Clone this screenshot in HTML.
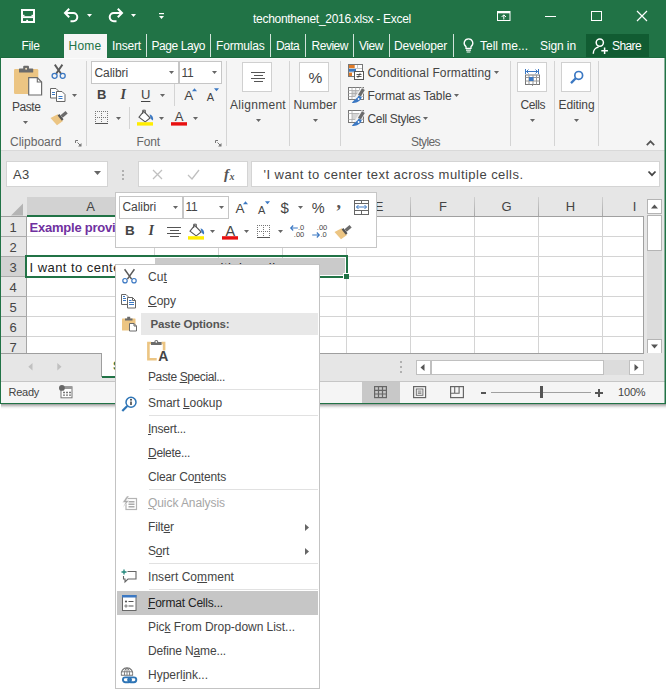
<!DOCTYPE html>
<html><head><meta charset="utf-8"><title>techonthenet_2016.xlsx - Excel</title>
<style>
html,body{margin:0;padding:0;background:#fff;}
body{width:666px;height:689px;position:relative;overflow:hidden;font-family:"Liberation Sans",sans-serif;}
body>div,body>svg,body>span{position:absolute;box-sizing:border-box;}
.t{white-space:nowrap;}
svg{overflow:visible;}
u{text-decoration:underline;text-underline-offset:1px;}
</style></head><body>
<div style="left:0px;top:0px;width:666px;height:404px;background:#217346;"></div>
<div style="left:0px;top:57px;width:666px;height:1px;background:#1c6a3e;"></div>
<div style="left:1px;top:58px;width:664px;height:92px;background:#f5f5f5;"></div>
<div style="left:1px;top:58px;width:664px;height:1px;background:#fbfbfb;"></div>
<div style="left:1px;top:150px;width:664px;height:47px;background:#e6e6e6;"></div>
<div style="left:1px;top:150px;width:664px;height:1px;background:#d9d9d9;"></div>
<svg style="left:21px;top:9px;" width="14" height="14" viewBox="0 0 14 14"><rect x="1" y="1" width="12" height="12" fill="none" stroke="#fff" stroke-width="2"/><rect x="2" y="7.200" width="10" height="1.900" fill="#fff"/><rect x="2" y="5.800" width="1.500" height="1.500" fill="#fff"/><rect x="10.500" y="5.800" width="1.500" height="1.500" fill="#fff"/><rect x="5.200" y="10.800" width="1.900" height="2.200" fill="#fff"/></svg>
<svg style="left:63px;top:8px;" width="16" height="15" viewBox="0 0 16 15"><path d="M2 5h8.2a4.1 4.1 0 0 1 0 8.2h-2.7" fill="none" stroke="#fff" stroke-width="2"/><path d="M6.2 0.8l-4.2 4.2l4.2 4.2" fill="none" stroke="#fff" stroke-width="2"/></svg>
<svg style="left:85.5px;top:13.0px;" width="7" height="5" viewBox="0 0 7 5"><path d="M1 1h5l-2.5 3z" fill="#fff"/></svg>
<svg style="left:107.5px;top:8px;" width="16" height="15" viewBox="0 0 16 15"><path d="M14 5h-8.2a4.1 4.1 0 0 0 0 8.2h2.7" fill="none" stroke="#fff" stroke-width="2"/><path d="M9.8 0.8l4.2 4.2l-4.2 4.2" fill="none" stroke="#fff" stroke-width="2"/></svg>
<svg style="left:129.5px;top:13.0px;" width="7" height="5" viewBox="0 0 7 5"><path d="M1 1h5l-2.5 3z" fill="#fff"/></svg>
<svg style="left:158px;top:12px;" width="7" height="8" viewBox="0 0 7 8"><rect x="1" y="1" width="5" height="1.2" fill="#fff"/><path d="M1 4h5l-2.5 3z" fill="#fff"/></svg>
<span id="t1" class="t" style="left:253px;top:10.5px;font-size:12px;line-height:16px;color:#ffffff;letter-spacing:-0.293px;">techonthenet_2016.xlsx - Excel</span>
<svg style="left:496.5px;top:11px;" width="14" height="10" viewBox="0 0 14 10"><rect x="0.5" y="0.5" width="12.500" height="9" fill="none" stroke="#fff"/><rect x="0.5" y="0.5" width="12.500" height="1.800" fill="#fff"/><path d="M6.800 4v4.500M4.600 6l2.200-2.200l2.200 2.200" fill="none" stroke="#fff" stroke-width="1"/></svg>
<div style="left:545px;top:16px;width:11px;height:1px;background:#ffffff;"></div>
<div style="left:591px;top:11px;width:10.5px;height:10px;border:1px solid #fff;"></div>
<svg style="left:636px;top:10px;" width="12" height="12" viewBox="0 0 12 12"><path d="M1 1l10 10M11 1l-10 10" stroke="#fff" stroke-width="1.2" fill="none"/></svg>
<span id="t2" class="t" style="left:21.5px;top:38.3px;font-size:12px;line-height:16px;color:#ffffff;letter-spacing:-0.336px;">File</span>
<div style="left:64px;top:34px;width:43px;height:24px;background:#f5f5f5;"></div>
<span id="t3" class="t" style="left:68.5px;top:38.3px;font-size:12px;line-height:16px;color:#217346;letter-spacing:0.246px;">Home</span>
<span id="t4" class="t" style="left:112px;top:38.3px;font-size:12px;line-height:16px;color:#ffffff;letter-spacing:-0.169px;">Insert</span>
<span id="t5" class="t" style="left:151.5px;top:38.3px;font-size:12px;line-height:16px;color:#ffffff;letter-spacing:-0.432px;">Page Layo</span>
<span id="t6" class="t" style="left:216px;top:38.3px;font-size:12px;line-height:16px;color:#ffffff;letter-spacing:-0.164px;">Formulas</span>
<span id="t7" class="t" style="left:276px;top:38.3px;font-size:12px;line-height:16px;color:#ffffff;letter-spacing:-0.590px;">Data</span>
<span id="t8" class="t" style="left:311.5px;top:38.3px;font-size:12px;line-height:16px;color:#ffffff;letter-spacing:-0.477px;">Review</span>
<span id="t9" class="t" style="left:359px;top:38.3px;font-size:12px;line-height:16px;color:#ffffff;letter-spacing:-0.449px;">View</span>
<span id="t10" class="t" style="left:394px;top:38.3px;font-size:12px;line-height:16px;color:#ffffff;letter-spacing:-0.189px;">Developer</span>
<div style="left:146px;top:34px;width:1px;height:23px;background:rgba(255,255,255,0.8);"></div>
<div style="left:210px;top:34px;width:1px;height:23px;background:rgba(255,255,255,0.8);"></div>
<div style="left:270px;top:34px;width:1px;height:23px;background:rgba(255,255,255,0.8);"></div>
<div style="left:305px;top:34px;width:1px;height:23px;background:rgba(255,255,255,0.8);"></div>
<div style="left:353px;top:34px;width:1px;height:23px;background:rgba(255,255,255,0.8);"></div>
<div style="left:389px;top:34px;width:1px;height:23px;background:rgba(255,255,255,0.8);"></div>
<div style="left:452.5px;top:34px;width:1px;height:23px;background:rgba(255,255,255,0.8);"></div>
<svg style="left:463px;top:38px;" width="11" height="15" viewBox="0 0 11 15"><path d="M5.500 0.800a4.300 4.300 0 0 0 -2.500 7.800v1.700h5v-1.700a4.300 4.300 0 0 0 -2.500 -7.800z" fill="none" stroke="#fff" stroke-width="1.300"/><path d="M3 12.200h5M3.600 14h3.800" stroke="#fff" stroke-width="1.200"/></svg>
<span id="t11" class="t" style="left:480px;top:38.3px;font-size:12px;line-height:16px;color:#ffffff;">Tell me...</span>
<span id="t12" class="t" style="left:540px;top:38.3px;font-size:12px;line-height:16px;color:#ffffff;letter-spacing:-0.100px;">Sign in</span>
<div style="left:586px;top:34px;width:63px;height:23px;background:#115c32;"></div>
<svg style="left:592px;top:37.5px;" width="17" height="17" viewBox="0 0 17 17"><circle cx="7.800" cy="4.600" r="3.600" fill="none" stroke="#fff" stroke-width="1.500"/><path d="M1.300 15.800a6.600 6.600 0 0 1 5.300-6.900" fill="none" stroke="#fff" stroke-width="1.500"/><path d="M12.600 9.400v6.600M9.300 12.700h6.600" stroke="#fff" stroke-width="1.500"/></svg>
<span id="t13" class="t" style="left:612px;top:38.3px;font-size:12px;line-height:16px;color:#ffffff;letter-spacing:-0.606px;">Share</span>
<div style="left:86px;top:61px;width:1px;height:85px;background:#d4d4d4;"></div>
<div style="left:226px;top:61px;width:1px;height:85px;background:#d4d4d4;"></div>
<div style="left:340px;top:61px;width:1px;height:85px;background:#d4d4d4;"></div>
<div style="left:510px;top:61px;width:1px;height:85px;background:#d4d4d4;"></div>
<div style="left:554px;top:61px;width:1px;height:85px;background:#d4d4d4;"></div>
<div style="left:598px;top:61px;width:1px;height:85px;background:#d4d4d4;"></div>
<svg style="left:14px;top:65px;" width="30" height="32" viewBox="0 0 30 32"><rect x="0" y="4" width="24.300" height="25.100" rx="1.300" fill="#ecc583"/>
<rect x="5" y="3.400" width="14.200" height="4.200" rx="0.600" fill="#6b6b6b"/><rect x="9.200" y="0.800" width="5.800" height="4" rx="1" fill="#6b6b6b"/><circle cx="12.100" cy="3.700" r="1" fill="#f3e3c3"/>
<path d="M14.700 12.700h8.600l4.300 4.300v13h-12.900z" fill="#fff" stroke="#6b6b6b" stroke-width="1.200"/><path d="M23.300 12.700v4.300h4.300" fill="none" stroke="#6b6b6b" stroke-width="1.100"/></svg>
<span id="t14" class="t" style="left:12px;top:98.9px;font-size:12px;line-height:16px;color:#444444;letter-spacing:-0.438px;">Paste</span>
<svg style="left:21.9px;top:119.9px;" width="7" height="5" viewBox="0 0 7 5"><path d="M1 1h5l-2.5 3z" fill="#666"/></svg>
<svg style="left:50.5px;top:64px;" width="16" height="16" viewBox="0 0 16 16"><path d="M3.800 0.600l6.600 9.600M11.400 0.600l-6.600 9.600" stroke="#5a5a5a" stroke-width="1.900" fill="none"/>
<circle cx="3.600" cy="11.800" r="2.500" fill="none" stroke="#3b78c3" stroke-width="1.300"/><circle cx="11.700" cy="11.800" r="2.500" fill="none" stroke="#3b78c3" stroke-width="1.300"/></svg>
<svg style="left:50px;top:88px;" width="16" height="14" viewBox="0 0 16 14"><path d="M0.5 0.5h5.5l2 2v7.5h-7.5z" fill="#fff" stroke="#666"/>
<path d="M6.5 3.5h5.5l3 3v7h-8.5z" fill="#fff" stroke="#666"/><path d="M8.5 8.5h4M8.5 10.5h4M2 4.5h3M2 6.5h3" stroke="#3b78c3"/></svg>
<svg style="left:71.0px;top:92.5px;" width="7" height="5" viewBox="0 0 7 5"><path d="M1 1h5l-2.5 3z" fill="#666"/></svg>
<svg style="left:50px;top:110px;" width="18" height="16" viewBox="0 0 18 16"><path d="M16.600 2.200l-5 4.300" stroke="#6b6b6b" stroke-width="3.300" fill="none"/><path d="M7.700 4.300l5.300 6.600l-6 4.300l-6.500-7.300z" fill="#ecc583"/><path d="M8.500 4.800l4.200 5.200" stroke="#555" stroke-width="2.200" fill="none"/></svg>
<span id="t15" class="t" style="left:10px;top:134.2px;font-size:12px;line-height:16px;color:#666;letter-spacing:0.014px;">Clipboard</span>
<svg style="left:75px;top:140px;" width="7" height="7" viewBox="0 0 7 7"><path d="M0.5 3v-2.5h2.5" fill="none" stroke="#777"/><path d="M2.5 2.5l3.5 3.5" stroke="#777"/><path d="M6.5 3v3.5h-3.5z" fill="#777"/></svg>
<div style="left:91px;top:61px;width:88px;height:23px;background:#fff;border:1px solid #c6c6c6;"></div>
<div style="left:179px;top:61px;width:43px;height:23px;background:#fff;border:1px solid #c6c6c6;"></div>
<span id="t16" class="t" style="left:94.5px;top:64.8px;font-size:12px;line-height:16px;color:#444444;letter-spacing:-0.074px;">Calibri</span>
<svg style="left:168.0px;top:70.0px;" width="7" height="5" viewBox="0 0 7 5"><path d="M1 1h5l-2.5 3z" fill="#666"/></svg>
<span id="t17" class="t" style="left:181.5px;top:64.8px;font-size:12px;line-height:16px;color:#444444;letter-spacing:-0.234px;">11</span>
<svg style="left:211.0px;top:70.0px;" width="7" height="5" viewBox="0 0 7 5"><path d="M1 1h5l-2.5 3z" fill="#666"/></svg>
<span id="t18" class="t" style="left:97px;top:87.0px;font-size:13px;line-height:16px;color:#444444;font-weight:bold;">B</span>
<span id="t19" class="t" style="left:120.5px;top:87.0px;font-size:13px;line-height:16px;color:#444444;font-weight:bold;font-style:italic;font-family:'Liberation Serif',serif;font-size:14px;">I</span>
<span id="t20" class="t" style="left:141px;top:87.0px;font-size:13px;line-height:16px;color:#444444;text-decoration:underline;text-underline-offset:2px;">U</span>
<svg style="left:158.8px;top:92.8px;" width="7" height="5" viewBox="0 0 7 5"><path d="M1 1h5l-2.5 3z" fill="#666"/></svg>
<div style="left:174px;top:84px;width:1px;height:22px;background:#d4d4d4;"></div>
<span id="t21" class="t" style="left:184.3px;top:87.7px;font-size:13.5px;line-height:16px;color:#444444;">A</span>
<svg style="left:192.10000000000002px;top:88px;" width="5" height="4" viewBox="0 0 5 4"><path d="M0 3.2l2.5-3l2.5 3z" fill="#3b78c3"/></svg>
<span id="t22" class="t" style="left:206.8px;top:88.7px;font-size:11px;line-height:16px;color:#444444;">A</span>
<svg style="left:214.10000000000002px;top:88px;" width="5" height="4" viewBox="0 0 5 4"><path d="M0 0.3h5l-2.5 3z" fill="#3b78c3"/></svg>
<svg style="left:95px;top:111px;" width="13" height="13" viewBox="0 0 13 13"><path d="M0 0.5h13M0 6.5h13M0.5 0v12M6.5 0v12M12.5 0v12" stroke="#777" stroke-dasharray="1 1" fill="none"/><path d="M0 12.5h13" stroke="#555"/></svg>
<svg style="left:115.2px;top:116.0px;" width="7" height="5" viewBox="0 0 7 5"><path d="M1 1h5l-2.5 3z" fill="#666"/></svg>
<div style="left:129px;top:107px;width:1px;height:22px;background:#d4d4d4;"></div>
<svg style="left:137px;top:108px;" width="17" height="18" viewBox="0 0 17 18"><path d="M6.7 3.4l6.5 6.6l-5 3.900l-6.2-4.7z" fill="#fff" stroke="#555" stroke-width="1.1"/><path d="M5.7 6v-3.800h2.6v3.2" fill="none" stroke="#555" stroke-width="1"/>
<path d="M12.6 6.2c2.8 1.2 4.2 3.6 3.2 6.300c-1.6-0.5-2.6-3-3.2-6.300z" fill="#3b78c3"/><rect x="0" y="14.2" width="16" height="3.4" fill="#ffed00"/></svg>
<svg style="left:158.2px;top:116.0px;" width="7" height="5" viewBox="0 0 7 5"><path d="M1 1h5l-2.5 3z" fill="#666"/></svg>
<svg style="left:171px;top:108px;" width="17" height="18" viewBox="0 0 17 18"><rect x="0" y="14.2" width="16" height="3.4" fill="#e81010"/></svg>
<span id="t23" class="t" style="left:179px;top:109.0955px;font-size:13px;line-height:16px;color:#444444;transform:translateX(-50%);">A</span>
<svg style="left:192.3px;top:116.0px;" width="7" height="5" viewBox="0 0 7 5"><path d="M1 1h5l-2.5 3z" fill="#666"/></svg>
<span id="t24" class="t" style="left:136.5px;top:133.5px;font-size:12px;line-height:16px;color:#666;letter-spacing:-0.129px;">Font</span>
<svg style="left:215px;top:139.5px;" width="7" height="7" viewBox="0 0 7 7"><path d="M0.5 3v-2.5h2.5" fill="none" stroke="#777"/><path d="M2.5 2.5l3.5 3.5" stroke="#777"/><path d="M6.5 3v3.5h-3.5z" fill="#777"/></svg>
<div style="left:242px;top:62px;width:30px;height:30px;background:#fff;border:1px solid #d0d0d0;"></div>
<div style="left:251px;top:72px;width:14px;height:1px;background:#555;"></div>
<div style="left:253.5px;top:75px;width:9.5px;height:1px;background:#555;"></div>
<div style="left:251px;top:78px;width:14px;height:1px;background:#555;"></div>
<div style="left:253.5px;top:81px;width:9.5px;height:1px;background:#555;"></div>
<span id="t25" class="t" style="left:230px;top:96.8px;font-size:12px;line-height:16px;color:#444444;letter-spacing:0.292px;">Alignment</span>
<svg style="left:255.0px;top:118.1px;" width="7" height="5" viewBox="0 0 7 5"><path d="M1 1h5l-2.5 3z" fill="#666"/></svg>
<div style="left:289px;top:61px;width:1px;height:85px;background:#d4d4d4;"></div>
<div style="left:299px;top:62px;width:30px;height:30px;background:#fff;border:1px solid #d0d0d0;"></div>
<span id="t26" class="t" style="left:308.5px;top:69.8px;font-size:15.5px;line-height:16px;color:#444444;">%</span>
<span id="t27" class="t" style="left:293.5px;top:96.8px;font-size:12px;line-height:16px;color:#444444;letter-spacing:0.135px;">Number</span>
<svg style="left:312.0px;top:118.1px;" width="7" height="5" viewBox="0 0 7 5"><path d="M1 1h5l-2.5 3z" fill="#666"/></svg>
<svg style="left:348px;top:64px;" width="16" height="16" viewBox="0 0 16 16"><rect x="0.5" y="0.5" width="14" height="12" fill="#fff" stroke="#777"/><path d="M9.5 1v3.500M1 4.500h13M1 8.200h6" stroke="#c8c8c8"/>
<rect x="1" y="1" width="5.7" height="3" fill="#e07b28"/><rect x="1" y="5" width="7" height="2.7" fill="#3b78c3"/><rect x="1" y="8.7" width="3" height="3.3" fill="#e07b28"/>
<rect x="6.5" y="7.5" width="9" height="8" fill="#fff" stroke="#555"/><path d="M8.5 10.500h5M8.5 12.500h5M12.2 9.200l-2.4 4.6" stroke="#444" stroke-width="0.9"/></svg>
<span id="t28" class="t" style="left:367.5px;top:64.8px;font-size:12px;line-height:16px;color:#444444;letter-spacing:0.126px;">Conditional Formatting</span>
<svg style="left:493.0px;top:70.3px;" width="7" height="5" viewBox="0 0 7 5"><path d="M1 1h5l-2.5 3z" fill="#666"/></svg>
<svg style="left:348px;top:87px;" width="17" height="17" viewBox="0 0 17 17"><rect x="0.5" y="0.5" width="15" height="12" fill="#fff" stroke="#777"/><rect x="4" y="3.5" width="7.5" height="6" fill="#d6d6d6"/><path d="M0.5 3.500h15M0.5 6.500h15M0.5 9.500h15M4 0.500v12M7.7 0.500v12M11.5 0.500v12" stroke="#aaa" stroke-width="0.8"/><path d="M15.8 1.5l-7.8 11.5" stroke="#f3f3f3" stroke-width="5" fill="none"/><path d="M15.4 2.2l-4 6.5" stroke="#6b6b6b" stroke-width="3.3" fill="none"/>
<path d="M10.6 8.4c-1.2 3-4.5 4.200-6.8 7.300c4 0.800 9-1 10-5.600z" fill="#3b78c3"/><circle cx="10.600" cy="12" r="0.900" fill="#fff"/></svg>
<span id="t29" class="t" style="left:367.5px;top:87.5px;font-size:12px;line-height:16px;color:#444444;letter-spacing:-0.122px;">Format as Table</span>
<svg style="left:452.7px;top:92.7px;" width="7" height="5" viewBox="0 0 7 5"><path d="M1 1h5l-2.5 3z" fill="#666"/></svg>
<svg style="left:348px;top:110px;" width="17" height="17" viewBox="0 0 17 17"><rect x="0.5" y="0.5" width="15" height="12" fill="#fff" stroke="#777"/><rect x="4" y="3.5" width="11" height="6" fill="#d6d6d6"/><path d="M0.5 3.500h15M0.5 9.500h15M4 0.500v12" stroke="#aaa" stroke-width="0.8"/><path d="M15.8 1.5l-7.8 11.5" stroke="#f3f3f3" stroke-width="5" fill="none"/><path d="M15.4 2.2l-4 6.5" stroke="#6b6b6b" stroke-width="3.3" fill="none"/>
<path d="M10.6 8.4c-1.2 3-4.5 4.200-6.8 7.300c4 0.800 9-1 10-5.600z" fill="#3b78c3"/><circle cx="10.600" cy="12" r="0.900" fill="#fff"/></svg>
<span id="t30" class="t" style="left:367.5px;top:110.5px;font-size:12px;line-height:16px;color:#444444;letter-spacing:-0.335px;">Cell Styles</span>
<svg style="left:421.7px;top:115.7px;" width="7" height="5" viewBox="0 0 7 5"><path d="M1 1h5l-2.5 3z" fill="#666"/></svg>
<span id="t31" class="t" style="left:411px;top:133.5px;font-size:12px;line-height:16px;color:#666;letter-spacing:-0.615px;">Styles</span>
<div style="left:517px;top:62px;width:30px;height:30px;background:#fff;border:1px solid #d0d0d0;"></div>
<svg style="left:525px;top:68.5px;" width="16" height="17" viewBox="0 0 16 17"><path d="M1 2.500h12M0.5 0v5M13.5 0v5M3.5 0.500l-2 2l2 2M10.5 0.500l2 2l-2 2" stroke="#3b78c3" fill="none"/>
<rect x="0.5" y="6" width="14" height="9.5" fill="#fff" stroke="#777"/><path d="M0.5 8.500h14M0.5 12h14M4 6v9.500M8 6v9.500M11.5 6v9.5" stroke="#999"/><rect x="4" y="8" width="4.5" height="4" fill="#3b78c3"/><path d="M7.5 15.500v1.3" stroke="#777"/></svg>
<span id="t32" class="t" style="left:520.5px;top:96.8px;font-size:12px;line-height:16px;color:#444444;letter-spacing:-0.434px;">Cells</span>
<svg style="left:529.0px;top:118.1px;" width="7" height="5" viewBox="0 0 7 5"><path d="M1 1h5l-2.5 3z" fill="#666"/></svg>
<div style="left:561px;top:62px;width:30px;height:30px;background:#fff;border:1px solid #d0d0d0;"></div>
<svg style="left:569px;top:68.5px;" width="16" height="16" viewBox="0 0 16 16"><circle cx="9.7" cy="6.4" r="3.9" fill="none" stroke="#3b78c3" stroke-width="1.7"/><path d="M6.8 9.300l-4.8 4.8" stroke="#3b78c3" stroke-width="2.3"/></svg>
<span id="t33" class="t" style="left:558.5px;top:96.8px;font-size:12px;line-height:16px;color:#444444;letter-spacing:-0.100px;">Editing</span>
<svg style="left:573.0px;top:118.1px;" width="7" height="5" viewBox="0 0 7 5"><path d="M1 1h5l-2.5 3z" fill="#666"/></svg>
<svg style="left:646px;top:139.5px;" width="10" height="6" viewBox="0 0 10 6"><path d="M0.8 5.200l3.7-3.900l3.7 3.9" fill="none" stroke="#555" stroke-width="1.7"/></svg>
<div style="left:6px;top:161px;width:102px;height:26px;background:#fff;border:1px solid #d4d4d4;"></div>
<span id="t34" class="t" style="left:13px;top:167.0px;font-size:13px;line-height:16px;color:#444444;letter-spacing:0.297px;">A3</span>
<svg style="left:93.2px;top:169.9px;" width="9" height="6" viewBox="0 0 9 6"><path d="M1 1h7l-3.5 4z" fill="#666"/></svg>
<div style="left:122px;top:169.5px;width:2px;height:2px;background:#b0b0b0;"></div>
<div style="left:122px;top:173.5px;width:2px;height:2px;background:#b0b0b0;"></div>
<div style="left:122px;top:177.5px;width:2px;height:2px;background:#b0b0b0;"></div>
<div style="left:138px;top:161px;width:110px;height:26px;background:#fff;border:1px solid #d4d4d4;"></div>
<svg style="left:152px;top:169px;" width="11" height="11" viewBox="0 0 11 11"><path d="M1 1l9 9M10 1l-9 9" stroke="#c0c0c0" stroke-width="1.3"/></svg>
<svg style="left:187px;top:169px;" width="13" height="11" viewBox="0 0 13 11"><path d="M1 6l4 4l7-9" stroke="#c0c0c0" stroke-width="1.3" fill="none"/></svg>
<span id="t35" class="t" style="left:224px;top:165.5px;font-size:15px;line-height:16px;color:#555;font-weight:bold;font-style:italic;font-family:'Liberation Serif',serif;">f</span>
<span id="t36" class="t" style="left:229.5px;top:168.5px;font-size:10px;line-height:16px;color:#555;font-weight:bold;font-style:italic;font-family:'Liberation Serif',serif;">x</span>
<div style="left:251px;top:161px;width:409px;height:26px;background:#fff;border:1px solid #d4d4d4;"></div>
<span id="t37" class="t" style="left:263.5px;top:167.0px;font-size:13px;line-height:16px;color:#444444;letter-spacing:0.456px;">'I want to center text across multiple cells.</span>
<svg style="left:647.5px;top:171px;" width="9" height="6" viewBox="0 0 9 6"><path d="M0.5 0.5l3.5 3.7l3.5-3.7" fill="none" stroke="#444" stroke-width="1.8"/></svg>
<div style="left:1px;top:197px;width:643px;height:156px;background:#fff;"></div>
<div style="left:1px;top:197px;width:664px;height:20px;background:#e6e6e6;"></div>
<div style="left:1px;top:197px;width:26px;height:156px;background:#e6e6e6;"></div>
<svg style="left:11px;top:203px;" width="13" height="13" viewBox="0 0 13 13"><path d="M12 0.5v12h-12z" fill="#b4b4b4"/></svg>
<div style="left:27px;top:197px;width:320px;height:19px;background:#d2d2d2;"></div>
<div style="left:27px;top:215px;width:320px;height:2px;background:#217346;"></div>
<div style="left:1px;top:257px;width:26px;height:20px;background:#d2d2d2;"></div>
<div style="left:25px;top:257px;width:2px;height:20px;background:#217346;"></div>
<div style="left:154px;top:197px;width:1px;height:19px;background:linear-gradient(#d0d0d0,#a8a8a8);"></div>
<div style="left:154px;top:217px;width:1px;height:136px;background:#d4d4d4;"></div>
<div style="left:218px;top:197px;width:1px;height:19px;background:linear-gradient(#d0d0d0,#a8a8a8);"></div>
<div style="left:218px;top:217px;width:1px;height:136px;background:#d4d4d4;"></div>
<div style="left:282px;top:197px;width:1px;height:19px;background:linear-gradient(#d0d0d0,#a8a8a8);"></div>
<div style="left:282px;top:217px;width:1px;height:136px;background:#d4d4d4;"></div>
<div style="left:346px;top:197px;width:1px;height:19px;background:linear-gradient(#d0d0d0,#a8a8a8);"></div>
<div style="left:346px;top:217px;width:1px;height:136px;background:#d4d4d4;"></div>
<div style="left:410px;top:197px;width:1px;height:19px;background:linear-gradient(#d0d0d0,#a8a8a8);"></div>
<div style="left:410px;top:217px;width:1px;height:136px;background:#d4d4d4;"></div>
<div style="left:474px;top:197px;width:1px;height:19px;background:linear-gradient(#d0d0d0,#a8a8a8);"></div>
<div style="left:474px;top:217px;width:1px;height:136px;background:#d4d4d4;"></div>
<div style="left:538px;top:197px;width:1px;height:19px;background:linear-gradient(#d0d0d0,#a8a8a8);"></div>
<div style="left:538px;top:217px;width:1px;height:136px;background:#d4d4d4;"></div>
<div style="left:602px;top:197px;width:1px;height:19px;background:linear-gradient(#d0d0d0,#a8a8a8);"></div>
<div style="left:602px;top:217px;width:1px;height:136px;background:#d4d4d4;"></div>
<div style="left:26px;top:217px;width:1px;height:136px;background:#a6a6a6;"></div>
<div style="left:1px;top:216px;width:643px;height:1px;background:#a0a0a0;"></div>
<div style="left:27px;top:215px;width:320px;height:2px;background:#217346;"></div>
<div style="left:27px;top:236px;width:616px;height:1px;background:#d4d4d4;"></div>
<div style="left:1px;top:236px;width:26px;height:1px;background:#ababab;"></div>
<span id="t38" class="t" style="left:9.5px;top:220.0px;font-size:13px;line-height:16px;color:#444444;">1</span>
<div style="left:27px;top:256px;width:616px;height:1px;background:#d4d4d4;"></div>
<div style="left:1px;top:256px;width:26px;height:1px;background:#ababab;"></div>
<span id="t39" class="t" style="left:9.5px;top:240.0px;font-size:13px;line-height:16px;color:#444444;">2</span>
<div style="left:27px;top:276px;width:616px;height:1px;background:#d4d4d4;"></div>
<div style="left:1px;top:276px;width:26px;height:1px;background:#ababab;"></div>
<span id="t40" class="t" style="left:9.5px;top:260.0px;font-size:13px;line-height:16px;color:#444444;">3</span>
<div style="left:27px;top:296px;width:616px;height:1px;background:#d4d4d4;"></div>
<div style="left:1px;top:296px;width:26px;height:1px;background:#ababab;"></div>
<span id="t41" class="t" style="left:9.5px;top:280.0px;font-size:13px;line-height:16px;color:#444444;">4</span>
<div style="left:27px;top:316px;width:616px;height:1px;background:#d4d4d4;"></div>
<div style="left:1px;top:316px;width:26px;height:1px;background:#ababab;"></div>
<span id="t42" class="t" style="left:9.5px;top:300.0px;font-size:13px;line-height:16px;color:#444444;">5</span>
<div style="left:27px;top:336px;width:616px;height:1px;background:#d4d4d4;"></div>
<div style="left:1px;top:336px;width:26px;height:1px;background:#ababab;"></div>
<span id="t43" class="t" style="left:9.5px;top:320.0px;font-size:13px;line-height:16px;color:#444444;">6</span>
<div style="left:27px;top:356px;width:616px;height:1px;background:#d4d4d4;"></div>
<div style="left:1px;top:356px;width:26px;height:1px;background:#ababab;"></div>
<span id="t44" class="t" style="left:9.5px;top:340.0px;font-size:13px;line-height:16px;color:#444444;">7</span>
<span id="t45" class="t" style="left:90.5px;top:198.5px;font-size:13px;line-height:16px;color:#444444;transform:translateX(-50%);">A</span>
<span id="t46" class="t" style="left:379px;top:198.5px;font-size:13px;line-height:16px;color:#444444;transform:translateX(-50%);">E</span>
<span id="t47" class="t" style="left:443px;top:198.5px;font-size:13px;line-height:16px;color:#444444;transform:translateX(-50%);">F</span>
<span id="t48" class="t" style="left:506.5px;top:198.5px;font-size:13px;line-height:16px;color:#444444;transform:translateX(-50%);">G</span>
<span id="t49" class="t" style="left:570.5px;top:198.5px;font-size:13px;line-height:16px;color:#444444;transform:translateX(-50%);">H</span>
<span id="t50" class="t" style="left:634.5px;top:198.5px;font-size:13px;line-height:16px;color:#444444;transform:translateX(-50%);">I</span>
<span id="t51" class="t" style="left:29.5px;top:220.0px;font-size:13px;line-height:16px;color:#7030a0;font-weight:bold;letter-spacing:-0.221px;">Example provi</span>
<div style="left:155px;top:258px;width:190px;height:17px;background:#cacaca;"></div>
<span id="t52" class="t" style="left:29.5px;top:260.0px;font-size:13px;line-height:16px;color:#222;letter-spacing:0.455px;">I want to center text across multiple cells.</span>
<div style="left:116px;top:257px;width:38.5px;height:8px;background:#fff;"></div>
<div style="left:25px;top:255px;width:323px;height:23px;border:2px solid #217346;"></div>
<div style="left:343px;top:273px;width:5px;height:5px;background:#217346;box-sizing:content-box;border-left:1px solid #fff;border-top:1px solid #fff;"></div>
<div style="left:644px;top:197px;width:21px;height:156px;background:#e6e6e6;"></div>
<div style="left:643px;top:216px;width:1px;height:138px;background:#a0a0a0;"></div>
<div style="left:647px;top:199px;width:15px;height:14.5px;background:#fff;border:1px solid #b4b4b4;"></div>
<svg style="left:651px;top:204px;" width="7" height="5" viewBox="0 0 7 5"><path d="M0 4.5l3.5-4l3.5 4z" fill="#555"/></svg>
<div style="left:647px;top:214.5px;width:15px;height:36px;background:#fff;border:1px solid #b4b4b4;"></div>
<div style="left:647px;top:250.5px;width:15px;height:88.5px;background:#dcdcdc;"></div>
<div style="left:647px;top:339px;width:15px;height:14.5px;background:#fff;border:1px solid #b4b4b4;"></div>
<svg style="left:651px;top:344px;" width="7" height="5" viewBox="0 0 7 5"><path d="M0 0.5h7l-3.5 4z" fill="#555"/></svg>
<div style="left:1px;top:353px;width:664px;height:28px;background:#e6e6e6;"></div>
<div style="left:1px;top:353px;width:643px;height:1px;background:#9e9e9e;"></div>
<div style="left:1px;top:381px;width:664px;height:1px;background:#c6c6c6;"></div>
<svg style="left:28px;top:362.5px;" width="5" height="8" viewBox="0 0 5 8"><path d="M4.5 0v7.5l-4.2-3.75z" fill="#c0c0c0"/></svg>
<svg style="left:56.5px;top:362.5px;" width="5" height="8" viewBox="0 0 5 8"><path d="M0.3 0v7.5l4.2-3.75z" fill="#c0c0c0"/></svg>
<div style="left:101px;top:353px;width:60px;height:24px;background:#fff;border-left:1px solid #9e9e9e;"></div>
<div style="left:102px;top:376px;width:60px;height:2px;background:#217346;"></div>
<span id="t53" class="t" style="left:113px;top:358.0px;font-size:12px;line-height:16px;color:#217346;font-weight:bold;">S</span>
<div style="left:399.5px;top:361px;width:2px;height:2px;background:#b0b0b0;"></div>
<div style="left:399.5px;top:366px;width:2px;height:2px;background:#b0b0b0;"></div>
<div style="left:399.5px;top:371px;width:2px;height:2px;background:#b0b0b0;"></div>
<div style="left:416px;top:360px;width:228px;height:15px;background:#dcdcdc;"></div>
<div style="left:416px;top:360px;width:15px;height:15px;background:#fff;border:1px solid #c0c0c0;"></div>
<svg style="left:420px;top:364px;" width="5" height="7" viewBox="0 0 5 7"><path d="M4.5 0v7l-4-3.5z" fill="#555"/></svg>
<div style="left:431px;top:360px;width:173px;height:15px;background:#fff;border:1px solid #c0c0c0;"></div>
<div style="left:629px;top:360px;width:15px;height:15px;background:#fff;border:1px solid #c0c0c0;"></div>
<svg style="left:634px;top:364px;" width="5" height="7" viewBox="0 0 5 7"><path d="M0.5 0v7l4-3.5z" fill="#555"/></svg>
<div style="left:1px;top:382px;width:664px;height:21px;background:#f5f5f5;"></div>
<span id="t54" class="t" style="left:8.5px;top:384.2px;font-size:11px;line-height:16px;color:#444444;letter-spacing:-0.259px;">Ready</span>
<svg style="left:59px;top:385px;" width="14" height="14" viewBox="0 0 14 14"><rect x="2" y="1.800" width="11" height="11" fill="#fff" stroke="#777"/><rect x="2" y="1.800" width="11" height="2.200" fill="#999"/><path d="M4 7.500h2M7 7.500h2M10 7.500h2M4 10.200h2M7 10.200h2M10 10.200h2" stroke="#777" stroke-width="1.300"/><circle cx="2.900" cy="2.900" r="2.900" fill="#666"/></svg>
<div style="left:362px;top:382px;width:38px;height:21px;background:#c8c8c8;"></div>
<svg style="left:374px;top:385.5px;" width="14" height="13" viewBox="0 0 14 13"><rect x="0.600" y="0.600" width="11.800" height="11" fill="none" stroke="#666" stroke-width="1.200"/><path d="M0.600 4.300h11.800M0.600 8h11.800M4.500 0.600v11M8.500 0.600v11" stroke="#666" stroke-width="1.200"/></svg>
<svg style="left:412.5px;top:385.5px;" width="14" height="13" viewBox="0 0 14 13"><rect x="0.600" y="0.600" width="12" height="11" fill="none" stroke="#666" stroke-width="1.200"/><rect x="3.300" y="3" width="6.600" height="6.300" fill="none" stroke="#666" stroke-width="0.900"/><path d="M4.800 5h3.600M4.800 6.200h3.600M4.800 7.500h3.600" stroke="#666" stroke-width="0.700"/></svg>
<svg style="left:450px;top:385.5px;" width="15" height="13" viewBox="0 0 15 13"><rect x="0.600" y="0.600" width="12.800" height="11" fill="none" stroke="#666" stroke-width="1.200"/><path d="M0.600 7.300h8.500v-6.700M4.700 0.600v6.700" fill="none" stroke="#666" stroke-width="1.100"/></svg>
<div style="left:481px;top:392px;width:5px;height:1.5px;background:#555;"></div>
<div style="left:491px;top:392px;width:100px;height:1px;background:#a0a0a0;"></div>
<div style="left:539.5px;top:386px;width:3px;height:12px;background:#555;"></div>
<div style="left:595px;top:392px;width:8px;height:1.5px;background:#555;"></div>
<div style="left:598.2px;top:388.5px;width:1.5px;height:8px;background:#555;"></div>
<span id="t55" class="t" style="left:618px;top:384.2px;font-size:11px;line-height:16px;color:#444444;letter-spacing:-0.160px;">100%</span>
<div style="left:0px;top:403px;width:666px;height:1px;background:#217346;"></div>
<div style="left:1px;top:404px;width:665px;height:5px;background:linear-gradient(rgba(0,0,0,0.40),rgba(0,0,0,0.20) 35%,rgba(0,0,0,0.06) 70%,rgba(0,0,0,0));"></div>
<div style="left:664px;top:58px;width:1px;height:345px;background:rgba(33,115,70,0.5);"></div>
<div style="left:115px;top:192px;width:262px;height:56px;background:#fff;border:1px solid #c6c6c6;"></div>
<div style="left:119px;top:196px;width:64px;height:23px;background:#fff;border:1px solid #c6c6c6;"></div>
<div style="left:183px;top:196px;width:46px;height:23px;background:#fff;border:1px solid #c6c6c6;"></div>
<span id="t56" class="t" style="left:122.5px;top:198.8px;font-size:12px;line-height:16px;color:#444444;letter-spacing:-0.074px;">Calibri</span>
<svg style="left:172.1px;top:204.8px;" width="7" height="5" viewBox="0 0 7 5"><path d="M1 1h5l-2.5 3z" fill="#666"/></svg>
<span id="t57" class="t" style="left:185.5px;top:198.8px;font-size:12px;line-height:16px;color:#444444;letter-spacing:-0.234px;">11</span>
<svg style="left:217.9px;top:204.8px;" width="7" height="5" viewBox="0 0 7 5"><path d="M1 1h5l-2.5 3z" fill="#666"/></svg>
<span id="t58" class="t" style="left:235.5px;top:200.5px;font-size:13.5px;line-height:16px;color:#444444;">A</span>
<svg style="left:243.3px;top:200.8px;" width="5" height="4" viewBox="0 0 5 4"><path d="M0 3.2l2.5-3l2.5 3z" fill="#3b78c3"/></svg>
<span id="t59" class="t" style="left:258.0px;top:201.5px;font-size:11px;line-height:16px;color:#444444;">A</span>
<svg style="left:265.3px;top:200.8px;" width="5" height="4" viewBox="0 0 5 4"><path d="M0 0.3h5l-2.5 3z" fill="#3b78c3"/></svg>
<span id="t60" class="t" style="left:280.5px;top:200.0px;font-size:15px;line-height:16px;color:#444444;">$</span>
<svg style="left:297.2px;top:204.8px;" width="7" height="5" viewBox="0 0 7 5"><path d="M1 1h5l-2.5 3z" fill="#666"/></svg>
<span id="t61" class="t" style="left:311.8px;top:200.3px;font-size:14.5px;line-height:16px;color:#444444;">%</span>
<span id="t62" class="t" style="left:336.5px;top:193.5px;font-size:18px;line-height:16px;color:#555;font-weight:bold;font-family:'Liberation Serif',serif;">,</span>
<svg style="left:354px;top:200px;" width="15" height="15" viewBox="0 0 15 15"><rect x="0.5" y="0.5" width="14" height="14" fill="#fff" stroke="#666" stroke-width="1"/><path d="M0.500 3.500h14M0.500 10.500h14M7.500 0.500v3M7.500 10.500v4" stroke="#666" stroke-width="1"/><path d="M2.500 7h10M4.500 5l-2 2l2 2M10.500 5l2 2l-2 2" stroke="#3b78c3" fill="none"/></svg>
<span id="t63" class="t" style="left:125px;top:223.4px;font-size:13.5px;line-height:16px;color:#444444;font-weight:bold;">B</span>
<span id="t64" class="t" style="left:148.5px;top:223.0px;font-size:14px;line-height:16px;color:#444444;font-weight:bold;font-style:italic;font-family:'Liberation Serif',serif;">I</span>
<div style="left:167px;top:227px;width:14px;height:1px;background:#555;"></div>
<div style="left:169.5px;top:230px;width:9.5px;height:1px;background:#555;"></div>
<div style="left:167px;top:233px;width:14px;height:1px;background:#555;"></div>
<div style="left:169.5px;top:236px;width:9.5px;height:1px;background:#555;"></div>
<svg style="left:188px;top:222px;" width="17" height="18" viewBox="0 0 17 18"><path d="M6.7 3.4l6.5 6.6l-5 3.900l-6.2-4.7z" fill="#fff" stroke="#555" stroke-width="1.1"/><path d="M5.7 6v-3.800h2.6v3.2" fill="none" stroke="#555" stroke-width="1"/>
<path d="M12.6 6.2c2.8 1.2 4.2 3.6 3.2 6.300c-1.6-0.5-2.6-3-3.2-6.300z" fill="#3b78c3"/><rect x="0" y="14.2" width="16" height="3.4" fill="#ffed00"/></svg>
<svg style="left:209.1px;top:228.5px;" width="7" height="5" viewBox="0 0 7 5"><path d="M1 1h5l-2.5 3z" fill="#666"/></svg>
<svg style="left:222.3px;top:222px;" width="17" height="18" viewBox="0 0 17 18"><rect x="0" y="14.2" width="16" height="3.4" fill="#e81010"/></svg>
<span id="t65" class="t" style="left:230.3px;top:222.57575px;font-size:14.5px;line-height:16px;color:#444444;transform:translateX(-50%);">A</span>
<svg style="left:243.0px;top:228.5px;" width="7" height="5" viewBox="0 0 7 5"><path d="M1 1h5l-2.5 3z" fill="#666"/></svg>
<svg style="left:257px;top:225px;" width="13" height="13" viewBox="0 0 13 13"><path d="M0 0.5h13M0 6.5h13M0.5 0v12M6.5 0v12M12.5 0v12" stroke="#777" stroke-dasharray="1 1" fill="none"/><path d="M0 12.5h13" stroke="#555"/></svg>
<svg style="left:277.0px;top:228.5px;" width="7" height="5" viewBox="0 0 7 5"><path d="M1 1h5l-2.5 3z" fill="#666"/></svg>
<svg style="left:290px;top:225px;" width="8" height="6" viewBox="0 0 8 6"><path d="M0.800 3h7M3.200 0.500l-2.500 2.500l2.500 2.500" stroke="#3b78c3" fill="none" stroke-width="1.100"/></svg>
<span id="t66" class="t" style="left:284.3px;top:223.0px;font-size:7.5px;line-height:10px;color:#444444;text-align:right;width:20px;">.0</span>
<span id="t67" class="t" style="left:284.3px;top:229.7px;font-size:7.5px;line-height:10px;color:#444444;text-align:right;width:20px;">.00</span>
<svg style="left:312px;top:231.7px;" width="8" height="6" viewBox="0 0 8 6"><path d="M0.200 3h7M4.800 0.500l2.500 2.500l-2.500 2.500" stroke="#3b78c3" fill="none" stroke-width="1.100"/></svg>
<span id="t68" class="t" style="left:307.3px;top:223.0px;font-size:7.5px;line-height:10px;color:#444444;text-align:right;width:20px;">.00</span>
<span id="t69" class="t" style="left:306.8px;top:229.7px;font-size:7.5px;line-height:10px;color:#444444;text-align:right;width:20px;">.0</span>
<svg style="left:333.5px;top:223.5px;" width="18" height="16" viewBox="0 0 18 16"><path d="M16.600 2.200l-5 4.300" stroke="#6b6b6b" stroke-width="3.300" fill="none"/><path d="M7.700 4.300l5.300 6.600l-6 4.300l-6.500-7.300z" fill="#ecc583"/><path d="M8.500 4.800l4.200 5.200" stroke="#555" stroke-width="2.200" fill="none"/></svg>
<div style="left:115px;top:264px;width:205px;height:425px;background:#fff;border:1px solid #c3c3c3;"></div>
<div style="left:117px;top:591px;width:201px;height:24px;background:#c6c6c6;"></div>
<div style="left:141px;top:313px;width:177px;height:22px;background:#e8e8e8;"></div>
<span id="t70" class="t" style="left:148px;top:269.0px;font-size:12px;line-height:16px;color:#444444;letter-spacing:0.099px;">Cu<u>t</u></span>
<span id="t71" class="t" style="left:148px;top:293.0px;font-size:12px;line-height:16px;color:#444444;letter-spacing:-0.008px;"><u>C</u>opy</span>
<span id="t72" class="t" style="left:150.5px;top:316.0px;font-size:11.5px;line-height:16px;color:#555;font-weight:bold;letter-spacing:-0.154px;">Paste Options:</span>
<span id="t73" class="t" style="left:148px;top:369.0px;font-size:12px;line-height:16px;color:#444444;letter-spacing:-0.400px;">Paste <u>S</u>pecial...</span>
<div style="left:149px;top:389px;width:169px;height:1px;background:#e1e1e1;"></div>
<span id="t74" class="t" style="left:148px;top:395.0px;font-size:12px;line-height:16px;color:#444444;letter-spacing:-0.061px;">Smart <u>L</u>ookup</span>
<div style="left:149px;top:415px;width:169px;height:1px;background:#e1e1e1;"></div>
<span id="t75" class="t" style="left:148px;top:421.0px;font-size:12px;line-height:16px;color:#444444;letter-spacing:-0.226px;"><u>I</u>nsert...</span>
<span id="t76" class="t" style="left:148px;top:445.0px;font-size:12px;line-height:16px;color:#444444;letter-spacing:-0.300px;"><u>D</u>elete...</span>
<span id="t77" class="t" style="left:148px;top:469.0px;font-size:12px;line-height:16px;color:#444444;letter-spacing:-0.147px;">Clear Co<u>n</u>tents</span>
<div style="left:149px;top:489px;width:169px;height:1px;background:#e1e1e1;"></div>
<span id="t78" class="t" style="left:148px;top:495.0px;font-size:12px;line-height:16px;color:#a6a6a6;letter-spacing:-0.075px;"><u>Q</u>uick Analysis</span>
<span id="t79" class="t" style="left:148px;top:519.0px;font-size:12px;line-height:16px;color:#444444;letter-spacing:-0.115px;">Filt<u>e</u>r</span>
<svg style="left:304.0px;top:522.5px;" width="6" height="9" viewBox="0 0 6 9"><path d="M1 1l4 3.5l-4 3.5z" fill="#666"/></svg>
<span id="t80" class="t" style="left:148px;top:543.0px;font-size:12px;line-height:16px;color:#444444;letter-spacing:-0.262px;">S<u>o</u>rt</span>
<svg style="left:304.0px;top:546.5px;" width="6" height="9" viewBox="0 0 6 9"><path d="M1 1l4 3.5l-4 3.5z" fill="#666"/></svg>
<div style="left:149px;top:563px;width:169px;height:1px;background:#e1e1e1;"></div>
<span id="t81" class="t" style="left:148px;top:569.0px;font-size:12px;line-height:16px;color:#444444;letter-spacing:0.045px;">Insert Co<u>m</u>ment</span>
<div style="left:149px;top:589px;width:169px;height:1px;background:#e1e1e1;"></div>
<span id="t82" class="t" style="left:148px;top:595.0px;font-size:12px;line-height:16px;color:#222;letter-spacing:-0.202px;"><u>F</u>ormat Cells...</span>
<span id="t83" class="t" style="left:148px;top:619.0px;font-size:12px;line-height:16px;color:#444444;letter-spacing:-0.039px;">Pic<u>k</u> From Drop-down List...</span>
<span id="t84" class="t" style="left:148px;top:643.0px;font-size:12px;line-height:16px;color:#444444;letter-spacing:-0.146px;">Define N<u>a</u>me...</span>
<span id="t85" class="t" style="left:148px;top:667.0px;font-size:12px;line-height:16px;color:#444444;">Hyperl<u>i</u>nk...</span>
<svg style="left:121.5px;top:269px;" width="15.0" height="15.0" viewBox="0 0 15 15"><path d="M2.6 0.300l7 9.800M12.4 0.300l-7 9.8" stroke="#5a5a5a" stroke-width="1.5" fill="none"/>
<circle cx="3" cy="11.7" r="2.2" fill="none" stroke="#3b78c3" stroke-width="1.2"/><circle cx="12" cy="11.7" r="2.2" fill="none" stroke="#3b78c3" stroke-width="1.2"/></svg>
<svg style="left:121px;top:294px;" width="16" height="15" viewBox="0 0 16 15"><path d="M0.5 0.500h4.500l2 2v8h-6.500z" fill="#fff" stroke="#666"/>
<path d="M6.5 3.500h5l3 3v7.500h-8z" fill="#fff" stroke="#666"/><path d="M11.5 3.500v3h3" fill="none" stroke="#666"/><path d="M8 8.500h5M8 10.500h5M8 6.500h2.500M2 4.500h3M2 6.500h3M2 2.500h2" stroke="#3b78c3"/></svg>
<svg style="left:122px;top:316px;" width="16" height="16" viewBox="0 0 16 16"><rect x="0" y="2.5" width="13.5" height="12" rx="0.5" fill="#ecc583"/><path d="M3 4.500v-2h2.200v-1.700h3v1.700h2.300v2z" fill="#6b6b6b"/>
<path d="M7.5 7.500h4.500l2.5 2.500v5h-7z" fill="#fff" stroke="#6b6b6b"/><path d="M12 7.500v2.500h2.5" fill="none" stroke="#6b6b6b"/></svg>
<svg style="left:147px;top:339px;" width="22" height="23" viewBox="0 0 22 23"><path d="M4 4h-2.600v16.300h8.300M14.5 4h2.600v7.5" fill="none" stroke="#ecc583" stroke-width="2.6"/>
<path d="M4 6v-3h3.300a2 2 0 0 1 4 0h3.300v3z" fill="#6b6b6b"/><circle cx="9.3" cy="2.8" r="0.9" fill="#fff"/></svg>
<span id="t86" class="t" style="left:158.3px;top:347.5px;font-size:14px;line-height:16px;color:#444;font-weight:bold;">A</span>
<svg style="left:120.5px;top:395.5px;" width="17" height="16" viewBox="0 0 17 16"><circle cx="10" cy="6.2" r="5" fill="#fff" stroke="#2e75b6" stroke-width="1.5"/><path d="M6.3 10l-5 5" stroke="#2e75b6" stroke-width="2.2"/>
<circle cx="10" cy="3.8" r="1" fill="#444"/><path d="M10 5.500v3.5" stroke="#444" stroke-width="1.6"/></svg>
<svg style="left:121.5px;top:495.5px;" width="16" height="15" viewBox="0 0 16 15"><rect x="4" y="2.500" width="10.500" height="11" fill="#fff" stroke="#b4b4b4" stroke-width="1.200"/><path d="M6.500 5.800h6M6.500 8.300h6M6.500 10.800h6" stroke="#ababab" stroke-width="1.500"/>
<path d="M5 0l-4.600 6.500h3l-2.600 5l6.400-7h-3.200l3.200-4.500z" fill="#ababab" stroke="#fff" stroke-width="0.500"/></svg>
<svg style="left:120.5px;top:569px;" width="17" height="15" viewBox="0 0 17 15"><path d="M6.5 2.500h8.500v7.500h-8l-3 3v-3h-1.500v-3" fill="none" stroke="#666" stroke-width="1.1"/>
<path d="M3 0.500v5M0.5 3h5" stroke="#21867a" stroke-width="1.3"/></svg>
<svg style="left:122px;top:594.5px;" width="15" height="16" viewBox="0 0 15 16"><rect x="0.5" y="0.5" width="13.5" height="15" fill="#fff" stroke="#666"/><rect x="0" y="0" width="14.5" height="2.5" fill="#3b78c3"/>
<circle cx="4" cy="6.5" r="1.1" fill="#555"/><circle cx="4" cy="11" r="1.1" fill="none" stroke="#555" stroke-width="0.8"/><path d="M6.5 6.500h5M6.5 11h5" stroke="#555" stroke-width="1.1"/></svg>
<svg style="left:121px;top:666.5px;" width="17" height="17" viewBox="0 0 17 17"><path d="M0.400 8.200A5.800 5.800 0 1 1 11.600 8.200z" fill="#fff" stroke="#777" stroke-width="1.100"/><path d="M6 1v7.200M0.700 4.800h10.600M3.500 8.200A3.200 6 0 0 1 6 1A3.200 6 0 0 1 8.500 8.200" fill="none" stroke="#777" stroke-width="0.900"/>
<rect x="1.900" y="10.400" width="8" height="4.800" rx="2.400" fill="#fff" stroke="#2e75b6" stroke-width="1.900"/><rect x="7.300" y="10.400" width="8" height="4.800" rx="2.400" fill="none" stroke="#2e75b6" stroke-width="1.900"/><path d="M6.500 12.800h4.200" stroke="#2e75b6" stroke-width="1.500"/></svg>
</body></html>
